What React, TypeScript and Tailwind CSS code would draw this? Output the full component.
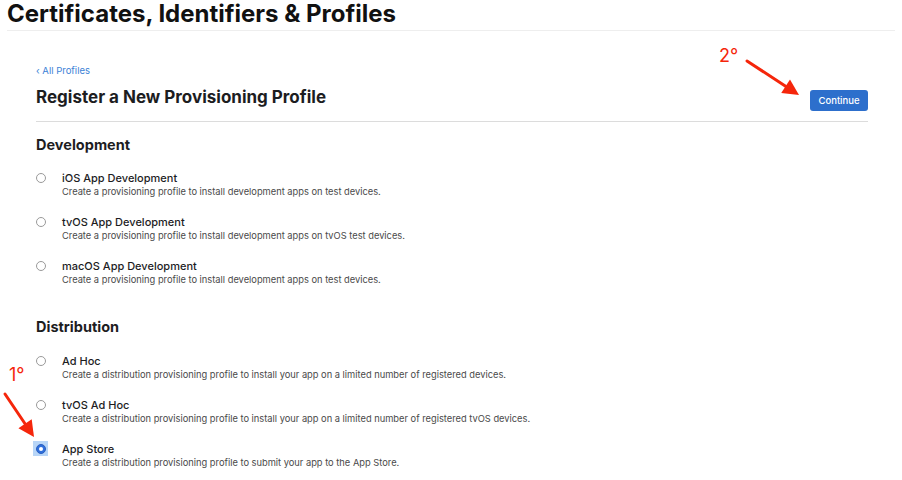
import React from "react";

const groups = [
  {
    title: "Development",
    items: [
      { name: "iOS App Development", desc: "Create a provisioning profile to install development apps on test devices." },
      { name: "tvOS App Development", desc: "Create a provisioning profile to install development apps on tvOS test devices." },
      { name: "macOS App Development", desc: "Create a provisioning profile to install development apps on test devices." },
    ],
  },
  {
    title: "Distribution",
    items: [
      { name: "Ad Hoc", desc: "Create a distribution provisioning profile to install your app on a limited number of registered devices." },
      { name: "tvOS Ad Hoc", desc: "Create a distribution provisioning profile to install your app on a limited number of registered tvOS devices." },
      { name: "App Store", desc: "Create a distribution provisioning profile to submit your app to the App Store.", checked: true },
    ],
  },
];

function Radio({ checked }: { checked?: boolean }) {
  if (checked) {
    return (
      <span className="flex items-center justify-center w-[15px] h-[15px] bg-[#b7d5f7] -ml-[3px] -mt-[3px]">
        <span className="flex items-center justify-center w-[10px] h-[10px] rounded-full bg-[#2f6fdc] border border-[#2a5fc0]">
          <span className="w-[4px] h-[4px] rounded-full bg-white" />
        </span>
      </span>
    );
  }
  return <span className="block w-[10px] h-[10px] rounded-full border border-[#9a9a9a] bg-white" />;
}

function Arrow({ x1, y1, x2, y2 }: { x1: number; y1: number; x2: number; y2: number }) {
  const ang = Math.atan2(y2 - y1, x2 - x1);
  const len = 16;
  const w = 8;
  const bx = x2 - len * Math.cos(ang);
  const by = y2 - len * Math.sin(ang);
  const px = -Math.sin(ang) * w;
  const py = Math.cos(ang) * w;
  return (
    <g>
      <line x1={x1} y1={y1} x2={bx} y2={by} stroke="#f5260b" strokeWidth="3" strokeLinecap="round" />
      <polygon points={`${x2},${y2} ${bx + px},${by + py} ${bx - px},${by - py}`} fill="#f5260b" />
    </g>
  );
}

export default function App() {
  return (
    <div className="relative w-[902px] h-[480px] bg-white overflow-hidden font-['Inter',sans-serif] text-[#1d1d1f]">
      <div className="px-[7px]">
        <h1 className="text-[24px] leading-[28px] font-bold text-[#111]">
          Certificates, Identifiers &amp; Profiles
        </h1>
        <div className="mt-[2px] h-px bg-[#eeeeee]" />
      </div>

      <div className="ml-[36px] w-[832px]">
        <div className="mt-[34px] text-[9.5px] leading-[12px] text-[#3b82d6]">‹ All Profiles</div>
        <div className="flex items-end justify-between mt-[8px]">
          <h2 className="text-[17px] leading-[24px] font-bold text-[#1d1d1f] mb-[2px]">
            Register a New Provisioning Profile
          </h2>
          <button className="w-[58px] h-[21px] rounded-[3px] bg-[#2d6fcc] text-white text-[9.5px] leading-[21px] font-medium">
            Continue
          </button>
        </div>
        <div className="mt-[10px] h-px bg-[#dcdcdc]" />

        {groups.map((g, gi) => (
          <div key={g.title} className={gi === 0 ? "mt-[13px]" : "mt-[31px]"}>
            <h3 className="text-[14.5px] leading-[20px] font-bold text-[#1d1d1f]">{g.title}</h3>
            <div className={`${gi === 0 ? "mt-[16px]" : "mt-[17px]"} flex flex-col gap-[17px]`}>
              {g.items.map((it) => (
                <div key={it.name} className="flex items-start">
                  <div className="w-[26px] pt-[2px]">
                    <Radio checked={it.checked} />
                  </div>
                  <div>
                    <div className="text-[11px] leading-[14px] font-medium text-[#1d1d1f]">{it.name}</div>
                    <div className="mt-[1px] text-[9.3px] leading-[12px] text-[#4a4a4a]">{it.desc}</div>
                  </div>
                </div>
              ))}
            </div>
          </div>
        ))}
      </div>

      <div className="absolute left-[719px] top-[45px] text-[18px] leading-[22px] text-[#f5260b]">2°</div>
      <div className="absolute left-[9px] top-[364px] text-[18px] leading-[22px] text-[#f5260b]">1°</div>
      <svg className="absolute left-0 top-0" width="902" height="480">
        <Arrow x1={747} y1={61} x2={799} y2={95} />
        <Arrow x1={5} y1={394} x2={34} y2={437} />
      </svg>
    </div>
  );
}
